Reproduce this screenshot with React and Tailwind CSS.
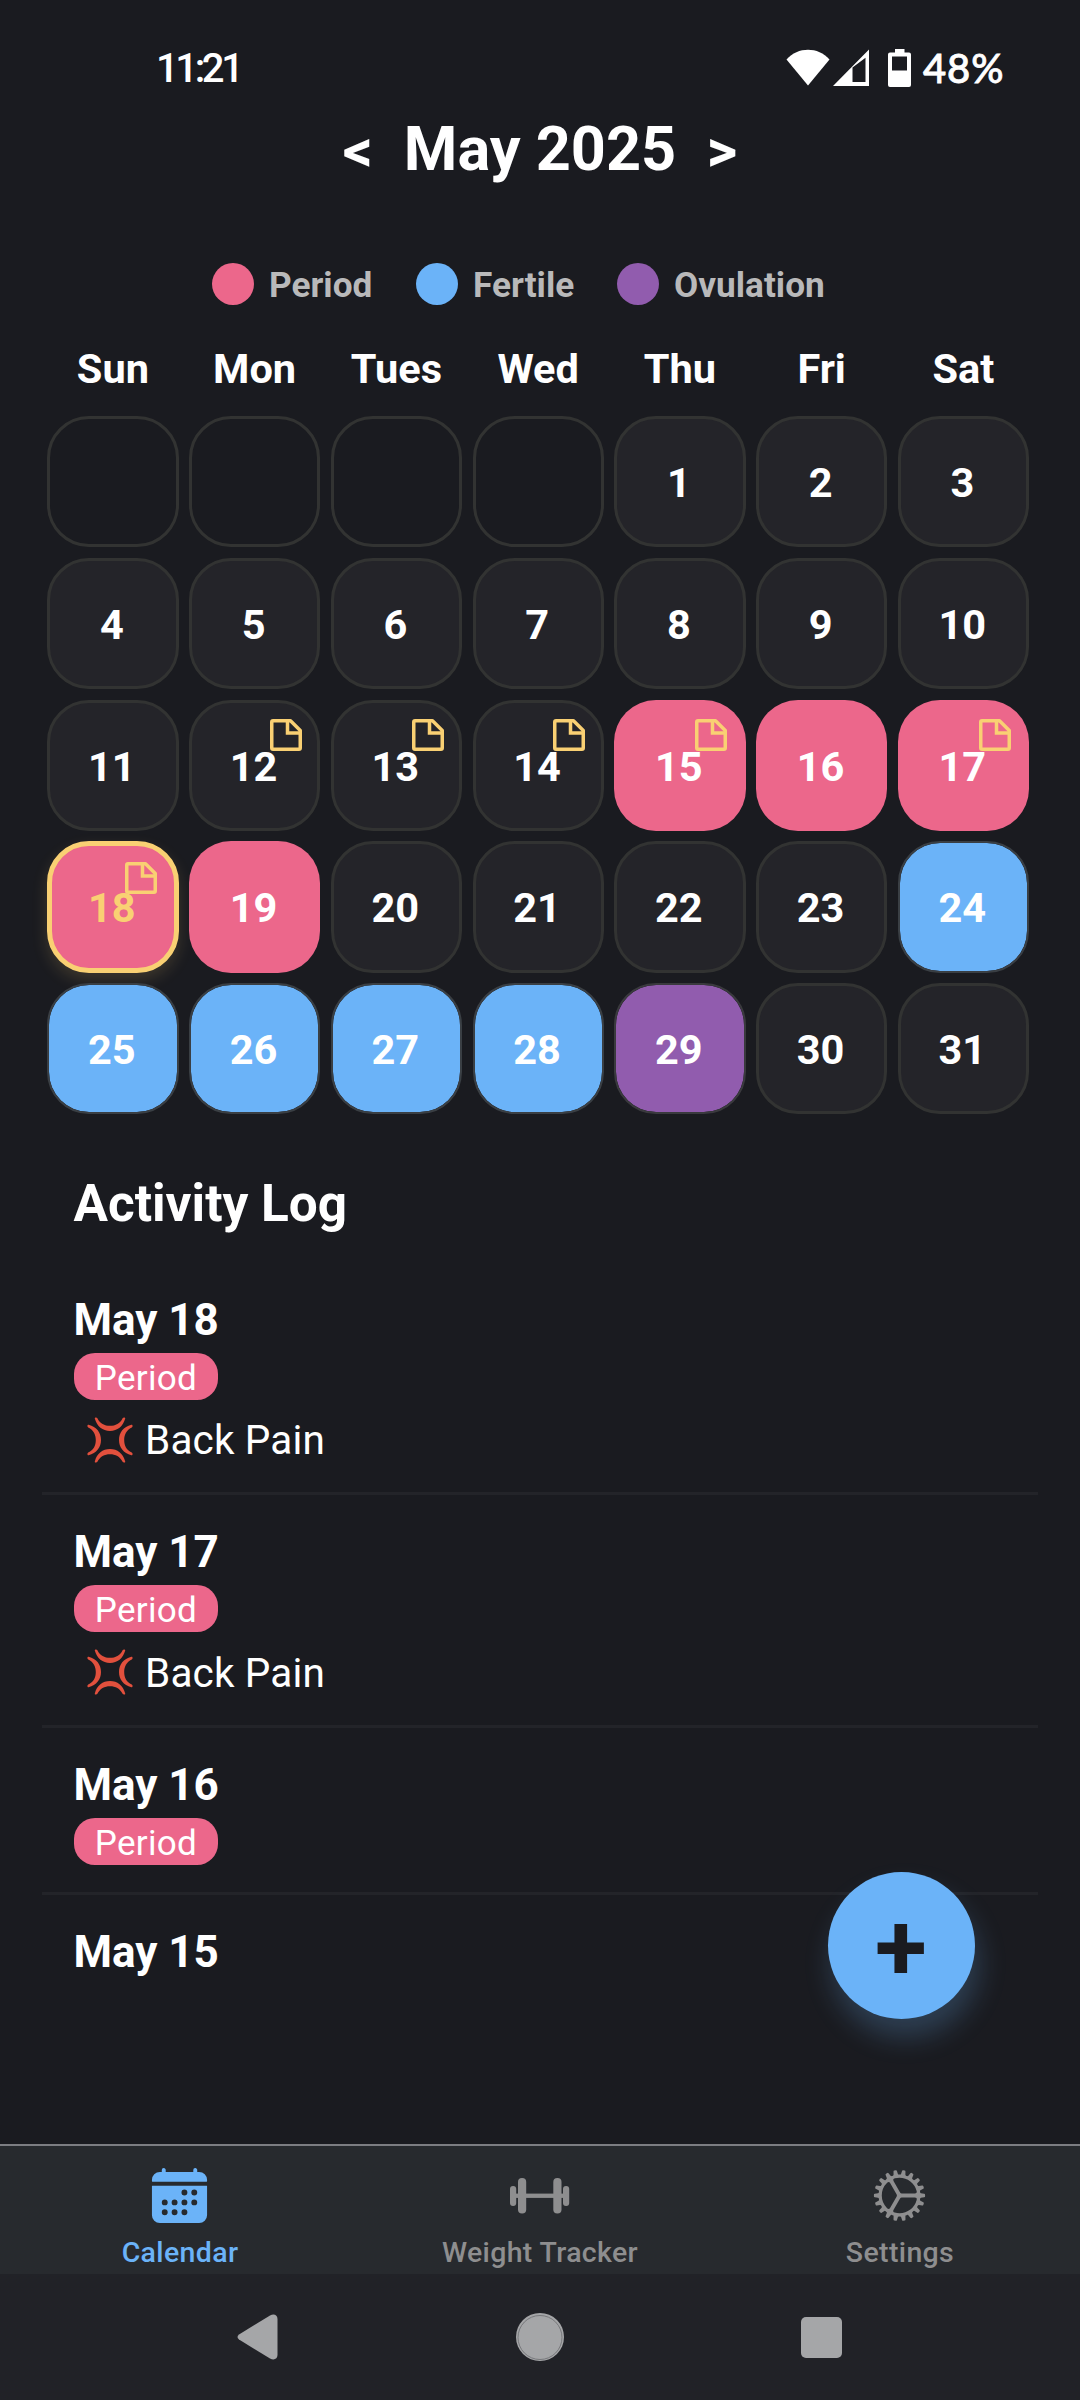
import React from "react";
import { IoCalendar, IoCogOutline } from "react-icons/io5";

const weekdays = ["Sun", "Mon", "Tues", "Wed", "Thu", "Fri", "Sat"];
const noted = [12, 13, 14, 15, 17, 18];
const period = [15, 16, 17, 18, 19];
const fertile = [24, 25, 26, 27, 28];
const cells = [null, null, null, null, ...Array.from({ length: 31 }, (_, i) => i + 1)];

const legend = [
  { label: "Period", dot: "bg-[#ec678b]", box: "w-[204px]" },
  { label: "Fertile", dot: "bg-[#6bb3f8]", box: "w-[201px]" },
  { label: "Ovulation", dot: "bg-[#915cae]", box: "w-[210px]" },
];

const log = [
  { date: "May 18", period: true, symptom: "Back Pain" },
  { date: "May 17", period: true, symptom: "Back Pain" },
  { date: "May 16", period: true },
  { date: "May 15" },
];

function dayStyle(day) {
  if (day === null) return "border-[3px] border-[#323332]";
  if (day === 18) return "border-[5px] border-[#f9d073] bg-[#ec678b] text-[#f9d073] shadow-[0_7px_16px_rgba(249,208,115,0.16)]";
  if (period.includes(day)) return "bg-[#ec678b]";
  if (fertile.includes(day)) return "border-[2px] border-[#3a3f44] bg-[#6bb3f8] bg-clip-padding";
  if (day === 29) return "border-[2px] border-[#3a3a3e] bg-[#915cae] bg-clip-padding";
  return "border-[3px] border-[#323332] bg-[#242429]";
}

function NoteIcon({ className }) {
  return (
    <svg viewBox="0 0 32 32" className={className} fill="none" stroke="#f9d073" strokeWidth="3.5" strokeLinejoin="round">
      <path d="M3 1.750H20.500L30.250 11.500V29a1.250 1.250 0 0 1-1.250 1.250H3A1.250 1.250 0 0 1 1.750 29V3A1.250 1.250 0 0 1 3 1.750Z" />
      <path d="M17.500 2V14H30.500" strokeLinejoin="miter" />
    </svg>
  );
}

function AngerIcon() {
  return (
    <svg viewBox="0 0 46 46" className="h-[46px] w-[46px]" fill="#e2503d">
      {[0, 90, 180, 270].map((a) => (
        <path
          key={a}
          transform={`rotate(${a} 23 23)`}
          d="M7.8 1.6C7.4 0.4 9.6 -0.2 10.4 1.2C13 6.6 17.5 8.8 23 8.8S33 6.6 35.6 1.2C36.4 -0.2 38.6 0.4 38.2 1.6C36 9.6 30.5 14 23 14S10 9.6 7.8 1.6Z"
        />
      ))}
    </svg>
  );
}

function DumbbellIcon() {
  return (
    <svg viewBox="0 0 63 63" className="h-[63px] w-[63px]" fill="currentColor">
      <rect x="2" y="22" width="6.200" height="20" rx="3" />
      <rect x="10" y="14" width="8.200" height="35.500" rx="4" />
      <rect x="45.300" y="14" width="8.200" height="35.500" rx="4" />
      <rect x="55" y="22" width="6.200" height="20" rx="3" />
      <rect x="5" y="29.600" width="53" height="4.300" />
    </svg>
  );
}

function StatusBar() {
  return (
    <div className="flex h-[112px] shrink-0 items-start justify-between pl-[156px] pr-[74px] pt-[46px] text-[39.5px] font-medium leading-[44px] text-white">
      <span className="pt-[1px] text-[40px] tracking-[-3.4px]">11:21</span>
      <div className="flex">
        <svg viewBox="0 0 126 40" className="mt-[2px] h-[40px] w-[126px]" fill="#fff">
          <path d="M0.500 11.500C12 -1.500 32 -1.500 43.500 11.500L22 37.500Z" />
          <path fillRule="evenodd" d="M47 38L83 1.500V38ZM66.500 19.500V34H79.500V9.800Z" />
          <path fillRule="evenodd" d="M109 1H118.500V4.500H123a2 2 0 0 1 2 2V37a2 2 0 0 1-2 2H104a2 2 0 0 1-2-2V6.500a2 2 0 0 1 2-2H109ZM106 8.500V22.500H121V8.500Z" />
        </svg>
        <span className="ml-[11px] w-[83px] font-['Lato',sans-serif] text-[40px] tracking-[0.9px] [-webkit-text-stroke:0.8px_white]">48%</span>
      </div>
    </div>
  );
}

function Tab({ icon, label, color }) {
  return (
    <div className={`flex flex-1 flex-col items-center pt-[18px] ${color}`}>
      <span className="mr-[2px]">{icon}</span>
      <span className="mt-[10px] text-[28.5px] font-medium leading-[32px] tracking-[0.35px]">{label}</span>
    </div>
  );
}

export default function App() {
  return (
    <div className="relative flex h-[2400px] w-[1080px] flex-col overflow-hidden bg-[#1a1b20] font-['Roboto',sans-serif] text-white">
      <StatusBar />

      <div className="flex h-[73px] shrink-0 items-center justify-center font-bold">
        <span className="w-[61px] pt-[4px] text-[59px] leading-[70px]">&lt;</span>
        <h1 className="pt-[1px] text-[61.2px] leading-[73px]">May 2025</h1>
        <span className="w-[61px] pt-[4px] text-right text-[59px] leading-[70px]">&gt;</span>
      </div>

      <div className="mt-[78px] flex h-[42px] shrink-0 pl-[212px]">
        {legend.map((l) => (
          <div key={l.label} className={`flex items-center gap-[15px] ${l.box}`}>
            <span className={`h-[42px] w-[42px] shrink-0 rounded-full ${l.dot}`} />
            <span className="pt-[2px] text-[35.2px] font-bold leading-[42px] text-[#b9b9ba]">{l.label}</span>
          </div>
        ))}
      </div>

      <div className="ml-[42px] mt-[40px] grid h-[48px] w-[992.25px] shrink-0 grid-cols-7">
        {weekdays.map((d) => (
          <span key={d} className="text-center text-[41.5px] font-bold leading-[48px]">{d}</span>
        ))}
      </div>

      <div className="ml-[47.25px] mt-[23px] grid shrink-0 grid-cols-[repeat(7,131.25px)] gap-[10.5px]">
        {cells.map((day, i) => (
          <div
            key={i}
            className={`relative flex h-[131.25px] w-[131.25px] items-center justify-center rounded-[42px] text-[41.5px] font-bold ${dayStyle(day)}`}
          >
            <span className="pr-[2px] pt-[3px]">{day}</span>
            {noted.includes(day) && (
              <NoteIcon
                className={
                  day === 18
                    ? "absolute right-[17px] top-[16px] h-[32px] w-[32px]"
                    : day < 15
                      ? "absolute right-[15.5px] top-[16px] h-[32px] w-[32px]"
                      : "absolute right-[18.5px] top-[19px] h-[32px] w-[32px]"
                }
              />
            )}
          </div>
        ))}
      </div>

      <h2 className="ml-[73.5px] mt-[59.75px] h-[59px] shrink-0 text-[51.3px] font-bold leading-[60px]">Activity Log</h2>

      <div className="mx-[42px] mt-[30px] flex-1 overflow-hidden">
        {log.map((e) => (
          <div
            key={e.date}
            className={`pl-[31.5px] pt-[31px] ${e.period ? "border-b-[3px] border-[#232429]" : ""} ${e.symptom ? "pb-[29.4px]" : "pb-[27px]"}`}
          >
            <div className="h-[52px] text-[44px] font-bold leading-[52px]">{e.date}</div>
            {e.period && (
              <div className="mt-[7px] flex h-[47px] w-[144px] items-center justify-center rounded-[21px] bg-[#ec678b] pl-[1px] pt-[4px] text-[35px] leading-[41px] tracking-[0.3px]">
                Period
              </div>
            )}
            {e.symptom && (
              <div className="mt-[17px] flex h-[46px] items-center pl-[13px] text-[40.5px] tracking-[0.15px]">
                <AngerIcon />
                <span className="ml-[12.5px] pt-[1px]">{e.symptom}</span>
              </div>
            )}
          </div>
        ))}
      </div>

      <div className="flex h-[130px] shrink-0 border-t-[2px] border-[#7c7d82] bg-[#272a2e]">
        <Tab icon={<IoCalendar className="h-[63px] w-[63px]" />} label="Calendar" color="text-[#6bb3f8]" />
        <Tab icon={<DumbbellIcon />} label="Weight Tracker" color="text-[#8e8e8f]" />
        <Tab icon={<IoCogOutline className="h-[63px] w-[63px]" />} label="Settings" color="text-[#8e8e8f]" />
      </div>

      <div className="flex h-[126px] shrink-0 items-center justify-between bg-[#212227] pl-[237px] pr-[238px]">
        <svg viewBox="0 0 41 46" className="h-[46px] w-[41px]" fill="#a5a6a8">
          <path d="M2 20.500L33 1.500C37 -0.500 40.500 1 40.500 5V41C40.500 45 37 46.500 33 44.500L2 25.500C0 24 0 22 2 20.500Z" />
        </svg>
        <svg viewBox="0 0 48 48" className="h-[48px] w-[48px]">
          <circle cx="24" cy="24" r="24" fill="#a5a6a8" />
          <circle cx="24" cy="24.500" r="22" fill="none" stroke="#77787b" strokeWidth="1" />
        </svg>
        <span className="h-[41px] w-[41px] rounded-[5px] bg-[#a5a6a8]" />
      </div>

      <button className="absolute left-[828px] top-[1872px] flex h-[147px] w-[147px] items-center justify-center rounded-full bg-[#6bb3f8] pr-[1px] pt-[6px] text-[95px] font-bold text-[#1a1b20] shadow-[4px_18px_28px_rgba(107,179,248,0.24)]">
        +
      </button>
    </div>
  );
}
